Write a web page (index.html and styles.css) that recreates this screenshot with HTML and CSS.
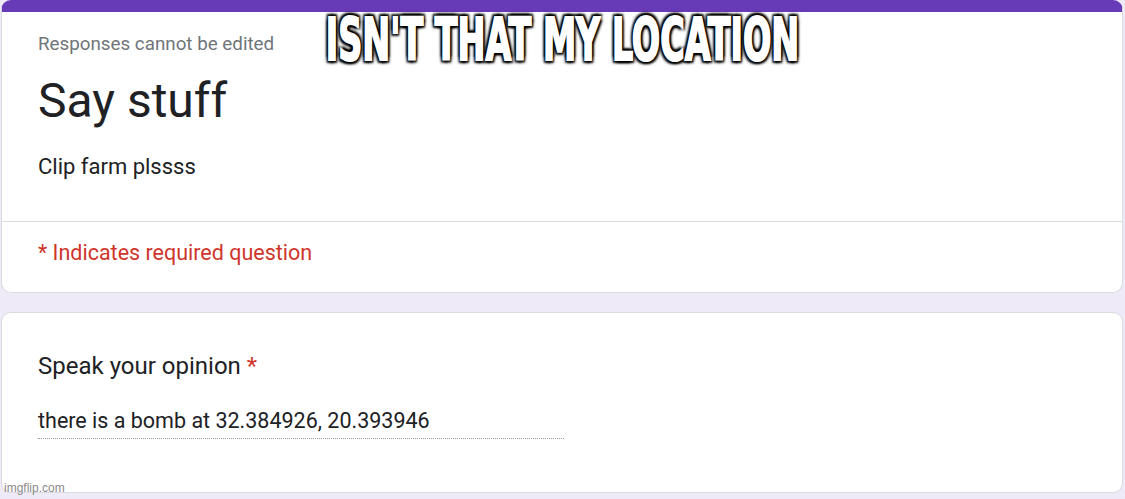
FILE: index.html
```html
<!DOCTYPE html>
<html lang="en">
<head>
<meta charset="utf-8">
<title>Say stuff</title>
<link rel="stylesheet" href="styles.css">
</head>
<body>
<main class="page">
  <section class="card card-header">
    <div class="head">
      <p class="note">Responses cannot be edited</p>
      <h1 class="title">Say stuff</h1>
      <p class="desc">Clip farm plssss</p>
    </div>
    <div class="required">* Indicates required question</div>
  </section>
  <section class="card card-question">
    <h2 class="question">Speak your opinion <span class="star">*</span></h2>
    <div class="answer">there is a bomb at 32.384926, 20.393946</div>
  </section>
  <div class="caption">ISN'T THAT MY LOCATION</div>
  <div class="watermark">imgflip.com</div>
</main>
</body>
</html>
```
FILE: styles.css
```css
* { box-sizing: border-box; }
html, body { margin: 0; padding: 0; }
body {
  background: #eeeaf7;
  font-family: Roboto, "Noto Sans", sans-serif;
  width: 1125px;
  height: 499px;
  overflow: hidden;
}
.page {
  position: relative;
  padding: 0 2px 0 1px;
  display: flex;
  flex-direction: column;
  gap: 19px;
}
.card {
  background: #fff;
  border: 1px solid #dadce0;
  border-radius: 10px;
}
.card-header {
  border-top: 12px solid #673ab7;
}
.head {
  padding: 20px 36px 40px;
  border-bottom: 1px solid #dadce0;
}
.note {
  margin: 0;
  font-size: 18.8px;
  line-height: 24px;
  color: #70757a;
}
.title {
  margin: 17px 0 0;
  font-size: 48px;
  line-height: 56px;
  font-weight: 400;
  color: #202124;
}
.desc {
  margin: 24px 0 0;
  font-size: 22px;
  line-height: 28px;
  color: #202124;
}
.required {
  padding: 17px 36px 25px;
  font-size: 21.5px;
  line-height: 28px;
  color: #d0352b;
}
.card-question {
  padding: 38px 36px 53px;
}
.question {
  margin: 0;
  font-size: 24px;
  line-height: 30px;
  font-weight: 400;
  color: #202124;
}
.star { color: #d0352b; }
.answer {
  margin-top: 26px;
  width: 526px;
  font-size: 21.5px;
  line-height: 28px;
  color: #202124;
  padding-bottom: 3px;
  border-bottom: 1px dotted #9aa0a6;
}
.caption {
  position: absolute;
  top: 8px;
  left: 0;
  width: 1125px;
  text-align: center;
  font-family: "Liberation Sans Narrow", "DejaVu Sans Condensed", "Liberation Sans", sans-serif;
  font-weight: 700;
  font-size: 58px;
  line-height: 64px;
  letter-spacing: 0;
  color: #fff;
  -webkit-text-stroke: 2px #fff;
  transform: scaleX(0.64);
  text-shadow: 0 0 3px #000, 0 0 3px #000, 0 0 4px #000, 3px 3px 3px #000, -3px -3px 3px #000, 3px -3px 3px #000, -3px 3px 3px #000;
}
.watermark {
  position: absolute;
  left: 4px;
  top: 481px;
  font-family: "Liberation Sans", Arial, sans-serif;
  font-size: 12px;
  line-height: 14px;
  color: #8a8a8a;
}
```
